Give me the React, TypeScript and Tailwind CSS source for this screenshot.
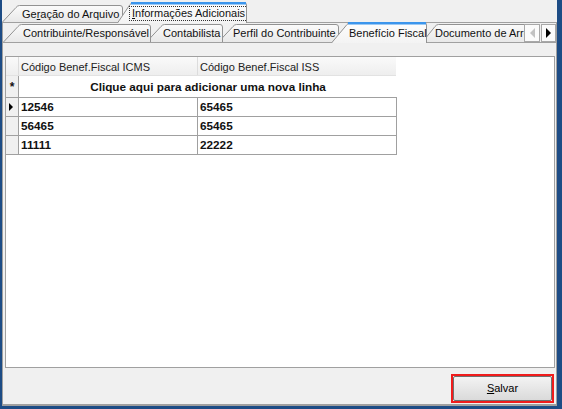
import React from 'react';

type TabProps = {
  id: string;
  w: number;
  h: number;
  slant: number;
  cls: string;
  textCls: string;
  selected?: boolean;
  openRight?: boolean;
  children: React.ReactNode;
};

const Tab = ({ id, w, h, slant, cls, textCls, selected, openRight, children }: TabProps) => {
  const edge = openRight
    ? `M0.5 ${h} L${slant} 2.5 Q${slant + 1.5} 0.5 ${slant + 3.5} 0.5 L${w} 0.5`
    : `M0.5 ${h} L${slant} 2.5 Q${slant + 1.5} 0.5 ${slant + 3.5} 0.5 L${w - 3} 0.5 Q${w - 0.5} 0.5 ${w - 0.5} 3 L${w - 0.5} ${h}`;
  const fill = openRight
    ? `M0.5 ${h} L${slant} 2.5 Q${slant + 1.5} 0.5 ${slant + 3.5} 0.5 L${w} 0.5 L${w} ${h} Z`
    : edge + ' Z';
  return (
    <div className={`relative shrink-0 ${cls}`}>
      <svg className="absolute inset-0" width={w} height={h}>
        <defs>
          <linearGradient id={id} x1="0" y1="0" x2="0" y2="1">
            <stop offset="0" stopColor={selected ? '#fdfdfd' : '#fbfbfb'} />
            <stop offset="1" stopColor={selected ? '#f3f3f3' : '#e8e8e8'} />
          </linearGradient>
        </defs>
        <path d={fill} fill={`url(#${id})`} />
        <path d={edge} fill="none" stroke="#929292" />
        {selected && <rect x={slant + 1} y={0} width={w - slant - 2} height={2.5} fill="#3b95ec" />}
      </svg>
      <div className={`relative whitespace-nowrap overflow-hidden ${textCls}`}>{children}</div>
    </div>
  );
};

const rows = [
  { a: '12546', b: '65465', current: true },
  { a: '56465', b: '65465' },
  { a: '11111', b: '22222' },
];

export default function App() {
  return (
    <div className="w-[562px] h-[409px] bg-[#1d4c85] pl-[2px] pr-[5px] pb-[3px] flex flex-col font-['Liberation_Sans',Arial,sans-serif] text-[11px] text-[#111]">
      <div className="flex-1 flex flex-col bg-[#f0f0f0]">
        {/* abas principais */}
        <div className="h-[23px] shrink-0 flex items-end border-b border-[#a0a0a0]">
          <Tab id="t1a" w={121} h={17} slant={14} cls="w-[121px] h-[17px] z-10" textCls="pl-[20px] pt-[2px] leading-[14px]">
            Ge<span className="underline">r</span>ação do Arquivo
          </Tab>
          <Tab id="t1b" w={130} h={21} slant={13} selected cls="-ml-[6px] w-[130px] h-[21px] -mb-px z-20" textCls="pl-[12px] pt-[4px] leading-[13px]">
            <span className="inline-block border border-dotted border-[#333] px-[2px] leading-[13px]">
              <span className="underline">I</span>nformações Adicionais
            </span>
          </Tab>
        </div>

        <div className="flex-1 flex flex-col border-l border-r border-b-2 border-[#a0a0a0]">
          {/* abas internas */}
          <div className="h-[20px] shrink-0 flex items-end border-b border-[#a0a0a0]">
            <Tab id="t2a" w={148} h={18} slant={15} cls="w-[148px] h-[18px] z-50" textCls="pl-[20px] pt-[2px] leading-[14px]">
              Contribuinte/Responsável
            </Tab>
            <Tab id="t2b" w={77} h={18} slant={15} cls="-ml-[5px] w-[77px] h-[18px] z-40" textCls="pl-[17px] pt-[2px] leading-[14px]">
              Contabilista
            </Tab>
            <Tab id="t2c" w={121} h={18} slant={15} cls="-ml-[5px] w-[121px] h-[18px] z-30" textCls="pl-[15px] pt-[2px] leading-[14px]">
              Perfil do Contribuinte
            </Tab>
            <Tab id="t2d" w={96} h={21} slant={16} selected cls="-ml-[8px] w-[96px] h-[21px] -mb-px z-[60]" textCls="pl-[18px] pt-[4px] leading-[14px]">
              Benefício Fiscal
            </Tab>
            <Tab id="t2e" w={102} h={18} slant={13} openRight cls="-ml-[5px] w-[102px] h-[18px] z-20" textCls="pl-[13px] pt-[2px] leading-[14px]">
              Documento de Arrecadação
            </Tab>
            <div className="flex gap-[1px] h-[18px] shrink-0">
              <div className="w-[16px] h-full bg-[#fbfbfb] border border-[#a8a8a8] flex items-center justify-center">
                <div className="w-0 h-0 border-y-[5px] border-y-transparent border-r-[5px] border-r-[#c2c2c2]" />
              </div>
              <div className="w-[15px] h-full bg-[#fbfbfb] border border-[#a8a8a8] flex items-center justify-center">
                <div className="w-0 h-0 border-y-[5px] border-y-transparent border-l-[5px] border-l-black" />
              </div>
            </div>
          </div>

          {/* conteúdo */}
          <div className="flex-1 flex flex-col pl-[2px] pr-[1px] pt-[13px] pb-[1px]">
            <div className="flex-1 bg-white border border-[#a0a0a0]">
              <div className="flex h-[19px] w-[390px] bg-gradient-to-b from-[#fafafa] to-[#eeeeee] border-b border-[#e2e2e2]">
                <div className="w-[13px] border-r border-[#dcdcdc]" />
                <div className="w-[179px] border-r border-[#dcdcdc] pl-[2px] pt-[4px] leading-[13px] text-[#222]">Código Benef.Fiscal ICMS</div>
                <div className="w-[198px] pl-[2px] pt-[4px] leading-[13px] text-[#222]">Código Benef.Fiscal ISS</div>
              </div>
              <div className="flex h-[22px] w-[391px] border-b border-[#a0a0a0]">
                <div className="w-[13px] bg-[#f0f0f0] border-r border-[#a0a0a0] flex items-center justify-center text-[12px] font-bold">*</div>
                <div className="flex-1 flex items-center justify-center font-bold text-[11.75px]">Clique aqui para adicionar uma nova linha</div>
              </div>
              {rows.map((r) => (
                <div key={r.a + r.b} className="flex h-[19px] w-[391px] border-b border-[#a0a0a0] font-bold text-[11.75px]">
                  <div className="w-[13px] bg-[#f0f0f0] border-r border-[#a0a0a0] flex items-center pl-[3px]">
                    {r.current && <div className="w-0 h-0 border-y-[4px] border-y-transparent border-l-[4px] border-l-black" />}
                  </div>
                  <div className="w-[179px] border-r border-[#a0a0a0] pl-[2px] flex items-center">{r.a}</div>
                  <div className="w-[199px] border-r border-[#a0a0a0] pl-[2px] flex items-center">{r.b}</div>
                </div>
              ))}
            </div>
          </div>

          {/* rodapé */}
          <div className="h-[35px] shrink-0 flex justify-end items-start pt-[5px] pr-[2px]">
            <div className="w-[103px] h-[29px] border-2 border-[#f01c1c]">
              <button
                type="button"
                className="w-full h-full border border-[#707070] rounded-[2px] bg-gradient-to-b from-[#f3f3f3] to-[#dadada] text-[11px] leading-[13px] text-black"
              >
                <span className="underline">S</span>alvar
              </button>
            </div>
          </div>
        </div>
      </div>
    </div>
  );
}
